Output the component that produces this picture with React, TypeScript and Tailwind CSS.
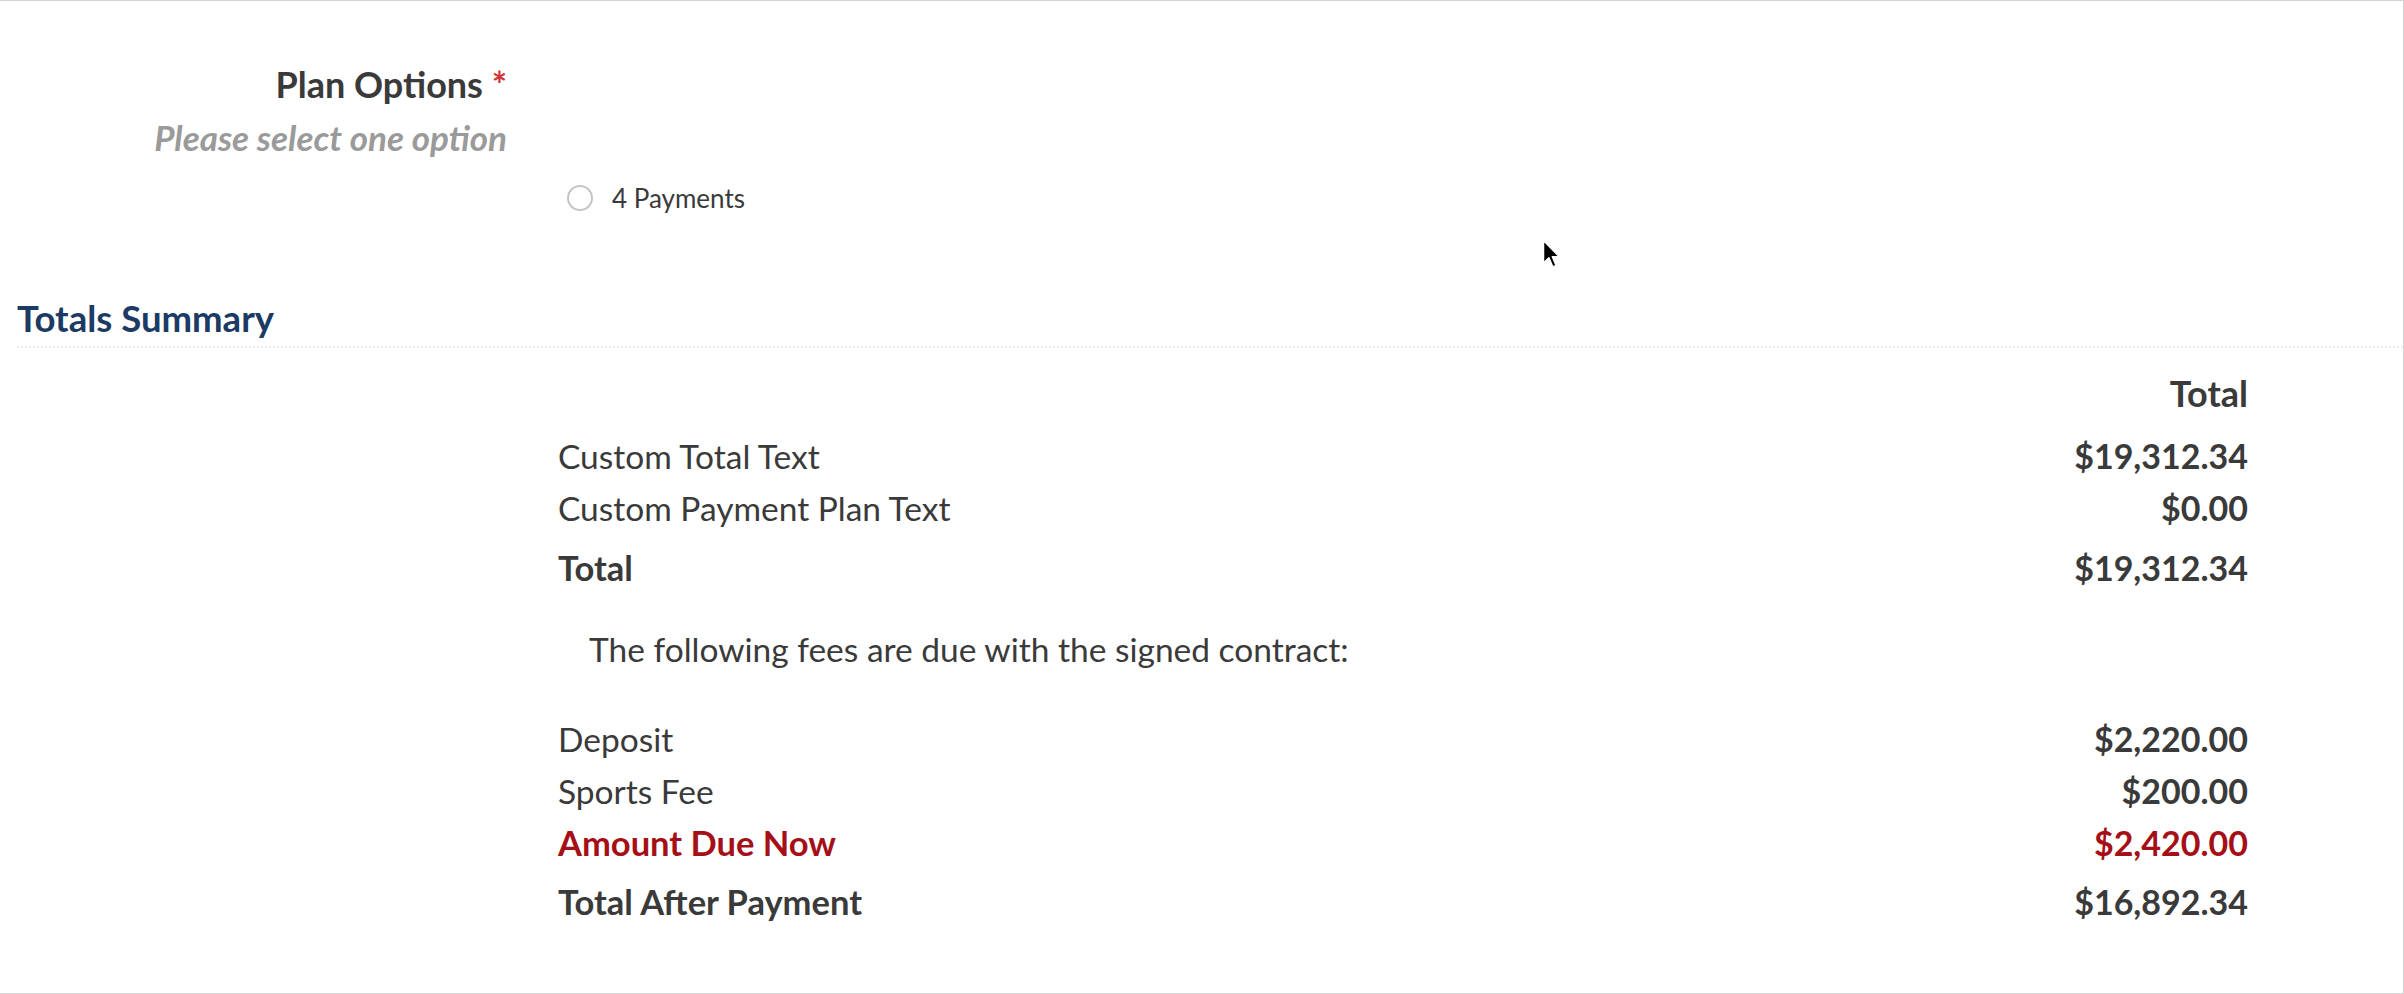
import React from "react";

interface SummaryRow {
  label: string;
  amount: string;
  bold?: boolean;
  red?: boolean;
  spaced?: boolean;
}

const totalsRows: SummaryRow[] = [
  { label: "Custom Total Text", amount: "$19,312.34" },
  { label: "Custom Payment Plan Text", amount: "$0.00" },
  { label: "Total", amount: "$19,312.34", bold: true, spaced: true },
];

const feeRows: SummaryRow[] = [
  { label: "Deposit", amount: "$2,220.00" },
  { label: "Sports Fee", amount: "$200.00" },
  { label: "Amount Due Now", amount: "$2,420.00", bold: true, red: true },
  { label: "Total After Payment", amount: "$16,892.34", bold: true, spaced: true },
];

const Row: React.FC<{ row: SummaryRow }> = ({ row }) => (
  <div
    className={`flex items-baseline justify-between leading-[51px] ${row.spaced ? "mt-[8px]" : ""} ${
      row.red ? "text-[#a50f17]" : "text-[#3a3a3a]"
    }`}
  >
    <span className={row.bold ? "text-[34.5px] font-bold" : ""}>{row.label}</span>
    <span className="text-[34px] font-bold">{row.amount}</span>
  </div>
);

const Cursor = () => (
  <svg className="absolute left-[1542px] top-[238px]" width="18" height="30" viewBox="0 0 12 20">
    <path
      d="M1 1 L1 16 L4.6 12.6 L7.2 18.6 L9.4 17.6 L6.9 11.8 L11.5 11.8 Z"
      fill="#000"
      stroke="#fff"
      strokeWidth="1"
      strokeLinejoin="round"
    />
  </svg>
);

export default function App() {
  return (
    <div className="relative h-[994px] w-[2404px] border-t border-r border-b border-[#d4d4d4] bg-white font-['Lato','Liberation_Sans',sans-serif] text-[33.5px] text-[#3a3a3a]">
      <Cursor />

      {/* plan options */}
      <div className="pt-[57px]">
        <div className="w-[507px] text-right leading-[53px]">
          <div className="text-[36px] font-bold">
            Plan Options <span className="text-[#d0343a]">*</span>
          </div>
          <div className="text-[35px] font-bold italic text-[#9a9a9a]">Please select one option</div>
        </div>
        <div className="mt-[19px] flex items-center pl-[567px] text-[26px] leading-[30px]">
          <span className="h-[26px] w-[26px] rounded-full border-2 border-[#c4c4c4] bg-white" />
          <span className="ml-[19px]">4 Payments</span>
        </div>
      </div>

      {/* totals summary */}
      <div className="ml-[17px] mt-[83px] border-b-2 border-dotted border-[#ececec] pb-[6px] text-[36.5px] font-bold leading-[44px] text-[#1c3b64]">
        Totals Summary
      </div>

      <div className="ml-[558px] mr-[155px] mt-[20px]">
        <div className="text-right text-[36px] font-bold leading-[51px]">Total</div>
        <div className="mt-[11px]">
          {totalsRows.map((r) => (
            <Row key={r.label} row={r} />
          ))}
        </div>
        <p className="mt-[31px] pl-[31px] leading-[51px]">The following fees are due with the signed contract:</p>
        <div className="mt-[38px]">
          {feeRows.map((r) => (
            <Row key={r.label} row={r} />
          ))}
        </div>
      </div>
    </div>
  );
}
